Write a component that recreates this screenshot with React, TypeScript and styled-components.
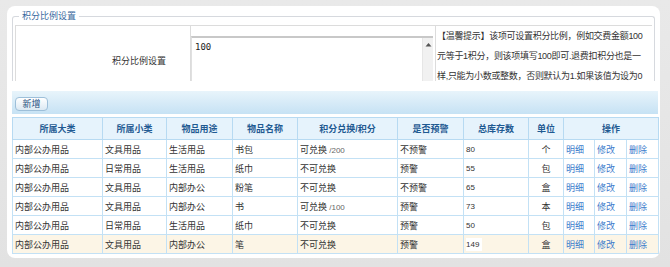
import * as React from 'react';
import styled, { createGlobalStyle } from 'styled-components';

interface Item {
    big: string
    small: string
    use: string
    name: string
    exchange: boolean
    points?: number
    warn: boolean
    stock: number
    unit: string
}

const items: Item[] = [
    { big: '内部公办用品', small: '文具用品', use: '生活用品', name: '书包', exchange: true, points: 200, warn: false, stock: 80, unit: '个' },
    { big: '内部公办用品', small: '日常用品', use: '生活用品', name: '纸巾', exchange: false, warn: true, stock: 55, unit: '包' },
    { big: '内部公办用品', small: '文具用品', use: '内部办公', name: '粉笔', exchange: false, warn: false, stock: 65, unit: '盒' },
    { big: '内部公办用品', small: '文具用品', use: '内部办公', name: '书', exchange: true, points: 100, warn: true, stock: 73, unit: '本' },
    { big: '内部公办用品', small: '日常用品', use: '生活用品', name: '纸巾', exchange: false, warn: true, stock: 50, unit: '包' },
    { big: '内部公办用品', small: '文具用品', use: '内部办公', name: '笔', exchange: false, warn: true, stock: 149, unit: '盒' },
]

// the hint is cut by the fieldset, only these lines show
const tipLines = [
    '【温馨提示】该项可设置积分比例，例如交费金额100',
    '元等于1积分，则该项填写100即可.退费扣积分也是一',
    '样,只能为小数或整数，否则默认为1.如果该值为设为0',
]

const colWidths = [90, 64, 66, 65, 100, 66, 65, 35, 31, 32, 32]

const GlobalStyle = createGlobalStyle`
body{
    margin: 0;
    background: #e4e4e4;
    font-family: "Liberation Sans", "Noto Sans CJK SC", sans-serif;
    font-size: 9px;
    color: #333;
}
`

const App = () => {
    return (
        <Frame>
            <GlobalStyle />
            <Panel>
                <Fieldset>
                    <Legend>积分比例设置</Legend>
                    <SettingRow>
                        <LabelCell>积分比例设置</LabelCell>
                        <InputCell>
                            <TextBox>
                                <TextValue>100</TextValue>
                                <ScrollTrack>
                                    <svg width="7" height="5" viewBox="0 0 7 5">
                                        <path d="M0.5 4.5 L3.5 1 L6.5 4.5 Z" fill="#555" />
                                    </svg>
                                </ScrollTrack>
                            </TextBox>
                        </InputCell>
                        <TipCell>
                            {tipLines.map((line, i) => <TipLine key={i}>{line}</TipLine>)}
                        </TipCell>
                    </SettingRow>
                </Fieldset>

                <Toolbar>
                    <AddButton type="button">新增</AddButton>
                </Toolbar>

                <Table>
                    <colgroup>
                        {colWidths.map((w, i) => <col key={i} style={{ width: w }} />)}
                    </colgroup>
                    <thead>
                        <tr>
                            <Th>所属大类</Th>
                            <Th>所属小类</Th>
                            <Th>物品用途</Th>
                            <Th>物品名称</Th>
                            <Th>积分兑换/积分</Th>
                            <Th>是否预警</Th>
                            <Th>总库存数</Th>
                            <Th>单位</Th>
                            <Th colSpan={3}>操作</Th>
                        </tr>
                    </thead>
                    <tbody>
                        {items.map((item, i) => (
                            <Tr key={i} highlight={i === items.length - 1}>
                                <Td>{item.big}</Td>
                                <Td>{item.small}</Td>
                                <Td>{item.use}</Td>
                                <Td>{item.name}</Td>
                                <Td>
                                    {item.exchange ? '可兑换' : '不可兑换'}
                                    {item.points && <Points> /{item.points}</Points>}
                                </Td>
                                <Td>{item.warn ? '预警' : '不预警'}</Td>
                                <Td><Stock white={i === items.length - 1}>{item.stock}</Stock></Td>
                                <Td center>{item.unit}</Td>
                                <Td><Link>明细</Link></Td>
                                <Td><Link>修改</Link></Td>
                                <Td><Link>删除</Link></Td>
                            </Tr>
                        ))}
                    </tbody>
                </Table>
            </Panel>
        </Frame>
    )
}

const Frame = styled.div`
width: 670px;
height: 267px;
box-sizing: border-box;
padding: 6px 10px 9px 7px;
background: linear-gradient(#e9e9e9, #e2e2e2);
`

const Panel = styled.div`
height: 252px;
box-sizing: border-box;
background: #fff;
border-radius: 8px;
padding: 4px 0 0 5px;
overflow: hidden;
`

const Fieldset = styled.fieldset`
margin: 0;
width: 643px;
box-sizing: border-box;
padding: 0 2px;
border: 1px solid #d6d9de;
border-bottom: none;
border-radius: 3px 3px 0 0;
`

const Legend = styled.legend`
padding: 0 3px;
margin-left: 4px;
font-size: 9px;
line-height: 12px;
color: #3a6aa0;
`

const SettingRow = styled.div`
margin-top: 3px;
height: 55px;
overflow: hidden;
display: grid;
grid-template-columns: 175px 245px 1fr;
border-top: 1px solid #dcdcdc;
border-left: 1px solid #dcdcdc;
`

const LabelCell = styled.div`
border-right: 1px solid #dcdcdc;
text-align: right;
padding: 29px 24px 0 0;
font-size: 9px;
line-height: 12px;
`

const InputCell = styled.div`
border-right: 1px solid #dcdcdc;
padding: 10px 2px 0 0;
`

const TextBox = styled.div`
display: flex;
height: 70px;
border-top: 2px solid #c8c8c8;
border-left: 1px solid #e0e0e0;
`

const TextValue = styled.div`
flex: 1;
padding: 4px 3px;
font-family: "DejaVu Sans Mono", "Liberation Mono", monospace;
font-size: 9px;
line-height: 11px;
color: #222;
`

const ScrollTrack = styled.div`
width: 10px;
background: #f1f1f1;
border-left: 1px solid #e6e6e6;
display: flex;
justify-content: center;
padding-top: 4px;
align-items: flex-start;
`

const TipCell = styled.div`
padding: 0 0 0 1px;
font-size: 9px;
line-height: 20px;
color: #333;
`

const TipLine = styled.div`
white-space: nowrap;
letter-spacing: -0.3px;
`

const Toolbar = styled.div`
margin-top: 10px;
width: 646px;
height: 23px;
box-sizing: border-box;
padding: 6px 3px 0;
background: linear-gradient(#e8f4fb, #c6e2f4);
`

const AddButton = styled.button`
display: block;
width: 33px;
height: 14px;
padding: 0;
border: 1px solid #9dbfd9;
border-radius: 4px;
background: linear-gradient(#ffffff, #dbe9f3);
font-family: inherit;
font-size: 9px;
line-height: 12px;
color: #1f4f7e;
`

const Table = styled.table`
margin-top: 3px;
width: 646px;
table-layout: fixed;
border-collapse: collapse;
border: 1px solid #b7daf2;
`

const Th = styled.th`
height: 21px;
padding: 0;
background: #e6f3fc;
border: 1px solid #b7daf2;
color: #1f5a92;
font-size: 9px;
font-weight: bold;
text-align: center;
`

const Tr = styled.tr<{ highlight?: boolean }>`
background: ${({ highlight }) => (highlight ? '#fcf5e6' : '#fff')};
`

const Td = styled.td<{ center?: boolean }>`
height: 18px;
padding: 0 2px;
border: 1px solid #c3e1f5;
white-space: nowrap;
overflow: hidden;
font-size: 9px;
text-align: ${({ center }) => (center ? 'center' : 'left')};
`

const Points = styled.span`
font-size: 8px;
color: #666;
`

const Stock = styled.span<{ white?: boolean }>`
font-size: 8px;
padding: 2px 3px 2px 0;
background: ${({ white }) => (white ? '#fff' : 'transparent')};
`

const Link = styled.a`
color: #3b7bcc;
cursor: pointer;
`

export default App;
